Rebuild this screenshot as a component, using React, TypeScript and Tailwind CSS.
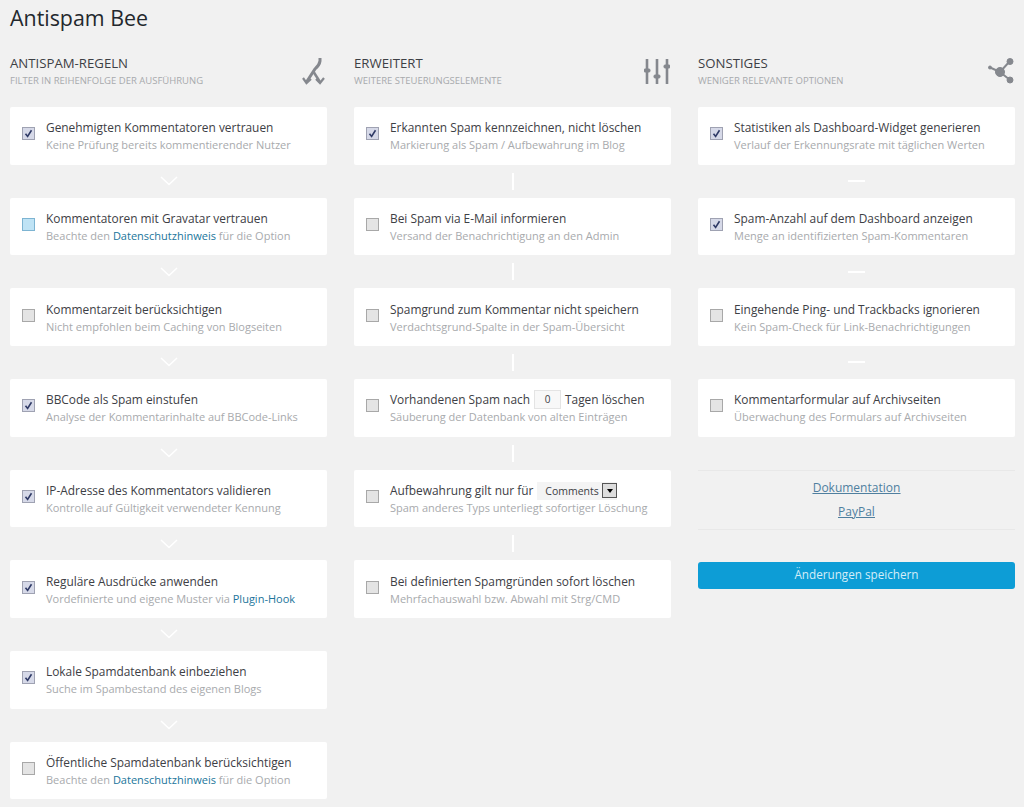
import React from 'react';

interface Rule {
  title: React.ReactNode;
  sub: React.ReactNode;
  checked?: boolean;
  focus?: boolean;
}

const linkClass = 'text-[#21759b]';

const rulesLeft: Rule[] = [
  { title: 'Genehmigten Kommentatoren vertrauen', sub: 'Keine Prüfung bereits kommentierender Nutzer', checked: true },
  {
    title: 'Kommentatoren mit Gravatar vertrauen',
    sub: <>Beachte den <a className={linkClass}>Datenschutzhinweis</a> für die Option</>,
    focus: true,
  },
  { title: 'Kommentarzeit berücksichtigen', sub: 'Nicht empfohlen beim Caching von Blogseiten' },
  { title: 'BBCode als Spam einstufen', sub: 'Analyse der Kommentarinhalte auf BBCode-Links', checked: true },
  { title: 'IP-Adresse des Kommentators validieren', sub: 'Kontrolle auf Gültigkeit verwendeter Kennung', checked: true },
  {
    title: 'Reguläre Ausdrücke anwenden',
    sub: <>Vordefinierte und eigene Muster via <a className={linkClass}>Plugin-Hook</a></>,
    checked: true,
  },
  { title: 'Lokale Spamdatenbank einbeziehen', sub: 'Suche im Spambestand des eigenen Blogs', checked: true },
  {
    title: 'Öffentliche Spamdatenbank berücksichtigen',
    sub: <>Beachte den <a className={linkClass}>Datenschutzhinweis</a> für die Option</>,
  },
];

const rulesMiddle: Rule[] = [
  { title: 'Erkannten Spam kennzeichnen, nicht löschen', sub: 'Markierung als Spam / Aufbewahrung im Blog', checked: true },
  { title: 'Bei Spam via E-Mail informieren', sub: 'Versand der Benachrichtigung an den Admin' },
  { title: 'Spamgrund zum Kommentar nicht speichern', sub: 'Verdachtsgrund-Spalte in der Spam-Übersicht' },
  {
    title: (
      <span className="flex items-center">
        Vorhandenen Spam nach
        <span className="mx-[4px] flex h-[19px] w-[27px] items-center justify-center border border-[#e4e4e4] bg-[#f8f8f8] text-[10px]">
          0
        </span>
        Tagen löschen
      </span>
    ),
    sub: 'Säuberung der Datenbank von alten Einträgen',
  },
  {
    title: (
      <span className="flex items-center">
        Aufbewahrung gilt nur für
        <span className="ml-[4px] mt-[2px] flex h-[18px] w-[80px] items-center justify-between bg-[#f4f4f4] pl-[8px] text-[10.5px]">
          Comments
          <span className="flex h-[15px] w-[15px] items-center justify-center border border-[#555] bg-[#ddd]">
            <span className="h-0 w-0 border-x-[3.5px] border-t-[4px] border-x-transparent border-t-black" />
          </span>
        </span>
      </span>
    ),
    sub: 'Spam anderes Typs unterliegt sofortiger Löschung',
  },
  { title: 'Bei definierten Spamgründen sofort löschen', sub: 'Mehrfachauswahl bzw. Abwahl mit Strg/CMD' },
];

const rulesRight: Rule[] = [
  { title: 'Statistiken als Dashboard-Widget generieren', sub: 'Verlauf der Erkennungsrate mit täglichen Werten', checked: true },
  { title: 'Spam-Anzahl auf dem Dashboard anzeigen', sub: 'Menge an identifizierten Spam-Kommentaren', checked: true },
  { title: 'Eingehende Ping- und Trackbacks ignorieren', sub: 'Kein Spam-Check für Link-Benachrichtigungen' },
  { title: 'Kommentarformular auf Archivseiten', sub: 'Überwachung des Formulars auf Archivseiten' },
];

const Checkbox: React.FC<{ checked?: boolean; focus?: boolean }> = ({ checked, focus }) => {
  const tone = focus
    ? 'border-[#7db4d2] bg-[#bfe3f5]'
    : checked
      ? 'border-[#9fa2b2] bg-[#d6d9e8]'
      : 'border-[#a8a8a8] bg-[#e4e4e4]';
  return (
    <span className={`mb-[4px] flex h-[13px] w-[13px] shrink-0 items-center justify-center border ${tone}`}>
      {checked && (
        <svg width="9" height="9" viewBox="0 0 9 9" fill="none">
          <path d="M1.5 4.8 L3.6 7.4 L7.5 1.2" stroke="#2f3a66" strokeWidth="1.6" />
        </svg>
      )}
    </span>
  );
};

const Card: React.FC<{ rule: Rule }> = ({ rule }) => (
  <div className="flex h-[57.67px] items-center gap-[11px] rounded-[2px] bg-white pl-[12px]">
    <Checkbox checked={rule.checked} focus={rule.focus} />
    <div>
      <div className="flex h-[18px] items-center text-[11.9px] leading-[18px] text-[#3d4045]">{rule.title}</div>
      <div className="mt-[1px] text-[11px] leading-[16px] text-[#a8aaad]">{rule.sub}</div>
    </div>
  </div>
);

const Chevron = () => (
  <svg width="20" height="12" viewBox="0 0 20 12" fill="none">
    <path d="M2 2 L10 9.5 L18 2" stroke="#fff" strokeWidth="1.5" />
  </svg>
);

const connectors = {
  chevron: <Chevron />,
  line: <span className="h-[17px] w-[2px] bg-white" />,
  dash: <span className="h-[2px] w-[17px] bg-white" />,
};

const RuleList: React.FC<{ rules: Rule[]; connector: keyof typeof connectors }> = ({ rules, connector }) => (
  <div className="flex flex-col">
    {rules.map((rule, index) => (
      <React.Fragment key={index}>
        {index > 0 && (
          <div className="flex h-[33px] items-center justify-center">{connectors[connector]}</div>
        )}
        <Card rule={rule} />
      </React.Fragment>
    ))}
  </div>
);

const ForkIcon = () => (
  <svg width="24" height="27" viewBox="0 0 24 27" fill="none" stroke="#85888e">
    <path d="M18 0 V3 Q17.5 7 13 11 L4.5 24" strokeWidth="3" />
    <path d="M11 13 L18 24" strokeWidth="2.5" />
    <path d="M1 20 L4.5 25 L9 21" strokeWidth="2.2" />
    <path d="M14 21 L18 25 L22 20" strokeWidth="2.2" />
  </svg>
);

const SlidersIcon = () => (
  <svg width="26" height="27" viewBox="0 0 26 27" fill="#85888e" stroke="#85888e">
    <path d="M3 1 V26 M13 1 V26 M23 1 V26" strokeWidth="2.6" fill="none" />
    <rect x="0" y="11" width="6" height="3" rx="1" />
    <rect x="10" y="17" width="6" height="3" rx="1" />
    <rect x="20" y="7" width="6" height="3" rx="1" />
  </svg>
);

const ShareIcon = () => (
  <svg width="26" height="26" viewBox="0 0 26 26" fill="#85888e" stroke="#85888e">
    <path d="M1 9 L12 14 L22 3 M12 14 L22 22" strokeWidth="2" fill="none" />
    <circle cx="12" cy="14" r="4.5" />
    <circle cx="22" cy="3.5" r="3" />
    <circle cx="22" cy="22" r="3" />
    <circle cx="2" cy="9.5" r="1.5" />
  </svg>
);

const ColumnHeader: React.FC<{ title: string; sub: string; icon: React.ReactNode }> = ({ title, sub, icon }) => (
  <div className="flex h-[53px] items-start justify-between">
    <div>
      <div className="text-[13.2px] leading-[18px] text-[#3d4045]">{title}</div>
      <div className="mt-[2px] text-[9.5px] leading-[14px] text-[#a8aaad]">{sub}</div>
    </div>
    <div className="mr-[1px] mt-[4px]">{icon}</div>
  </div>
);

const App: React.FC = () => (
  <div className="min-h-screen overflow-hidden bg-[#f1f1f1] pl-[10px] font-['Open_Sans',sans-serif]">
    <h1 className="h-[54px] pt-[3px] text-[21.4px] leading-[30px] text-[#23282d]">Antispam Bee</h1>
    <div className="grid grid-cols-[317px_317px_317px] gap-x-[27px]">
      <div>
        <ColumnHeader title="ANTISPAM-REGELN" sub="FILTER IN REIHENFOLGE DER AUSFÜHRUNG" icon={<ForkIcon />} />
        <RuleList rules={rulesLeft} connector="chevron" />
      </div>
      <div>
        <ColumnHeader title="ERWEITERT" sub="WEITERE STEUERUNGSELEMENTE" icon={<SlidersIcon />} />
        <RuleList rules={rulesMiddle} connector="line" />
      </div>
      <div>
        <ColumnHeader title="SONSTIGES" sub="WENIGER RELEVANTE OPTIONEN" icon={<ShareIcon />} />
        <RuleList rules={rulesRight} connector="dash" />
        <div className="mt-[33px] flex h-[60px] flex-col items-center justify-center gap-[6px] border-y border-[#e8e8e8] text-[12px] leading-[18px] text-[#4f7f9f] underline">
          <a>Dokumentation</a>
          <a>PayPal</a>
        </div>
        <button className="mt-[32px] h-[27px] w-full rounded-[3px] bg-[#0d9dd6] text-[11.7px] text-[#d4edf8]">
          Änderungen speichern
        </button>
      </div>
    </div>
  </div>
);

export default App;
